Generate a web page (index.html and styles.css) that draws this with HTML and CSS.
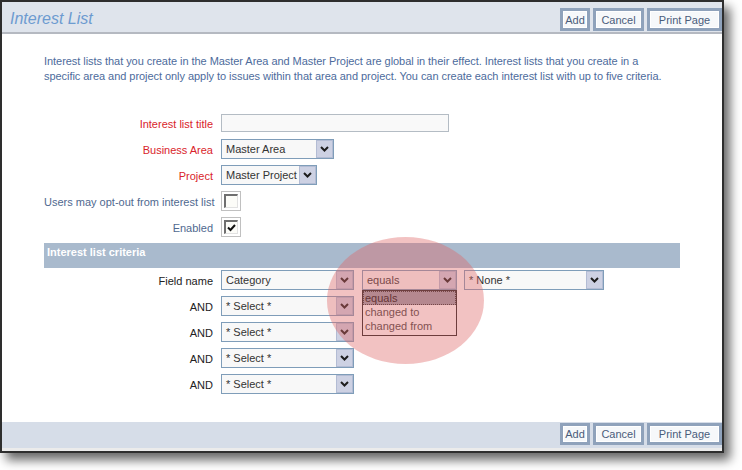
FILE: index.html
```html
<!DOCTYPE html>
<html>
<head>
    <meta charset="UTF-8">
    <title>Interest List</title>
    <link rel="stylesheet" href="styles.css">
</head>
<body>
<div class="shot">
    <div class="win">
        <div class="head">
            <h1>Interest List</h1>
            <div class="btns">
                <button class="btn btnAdd">Add</button>
                <button class="btn btnCancel">Cancel</button>
                <button class="btn btnPrint">Print Page</button>
            </div>
        </div>

        <div class="body">
            <p class="intro">Interest lists that you create in the Master Area and Master Project are global in their effect. Interest lists that you create in a<br>specific area and project only apply to issues within that area and project. You can create each interest list with up to five criteria.</p>

            <div class="form">
                <div class="row">
                    <label class="req">Interest list title</label>
                    <span class="text"></span>
                </div>
                <div class="row">
                    <label class="req">Business Area</label>
                    <div class="sel selArea"><span class="val">Master Area</span><span class="arr"><svg width="9" height="6" viewBox="0 0 9 6"><polyline points="1,1 4.5,4.5 8,1" fill="none" stroke="#1d1d1d" stroke-width="2"/></svg></span></div>
                </div>
                <div class="row">
                    <label class="req">Project</label>
                    <div class="sel selProject"><span class="val">Master Project</span><span class="arr"><svg width="9" height="6" viewBox="0 0 9 6"><polyline points="1,1 4.5,4.5 8,1" fill="none" stroke="#1d1d1d" stroke-width="2"/></svg></span></div>
                </div>
                <div class="row">
                    <label>Users may opt-out from interest list</label>
                    <span class="chk"><span class="box"></span></span>
                </div>
                <div class="row">
                    <label>Enabled</label>
                    <span class="chk"><span class="box"><svg width="9" height="8" viewBox="0 0 9 8"><polyline points="1,3.5 3.5,6 8,1" fill="none" stroke="#111" stroke-width="2"/></svg></span></span>
                </div>
            </div>

            <div class="section">Interest list criteria</div>

            <div class="criteria">
                <div class="row">
                    <label class="dark">Field name</label>
                    <div class="sel selField"><span class="val">Category</span><span class="arr"><svg width="9" height="6" viewBox="0 0 9 6"><polyline points="1,1 4.5,4.5 8,1" fill="none" stroke="#1d1d1d" stroke-width="2"/></svg></span></div>
                    <div class="sel selOp"><span class="val">equals</span><span class="arr"><svg width="9" height="6" viewBox="0 0 9 6"><polyline points="1,1 4.5,4.5 8,1" fill="none" stroke="#1d1d1d" stroke-width="2"/></svg></span>
                        <ul class="opts">
                            <li class="on">equals</li>
                            <li>changed to</li>
                            <li>changed from</li>
                        </ul>
                    </div>
                    <div class="sel selVal"><span class="val">* None *</span><span class="arr"><svg width="9" height="6" viewBox="0 0 9 6"><polyline points="1,1 4.5,4.5 8,1" fill="none" stroke="#1d1d1d" stroke-width="2"/></svg></span></div>
                </div>
                <div class="row">
                    <label class="dark">AND</label>
                    <div class="sel selField"><span class="val">* Select *</span><span class="arr"><svg width="9" height="6" viewBox="0 0 9 6"><polyline points="1,1 4.5,4.5 8,1" fill="none" stroke="#1d1d1d" stroke-width="2"/></svg></span></div>
                </div>
                <div class="row">
                    <label class="dark">AND</label>
                    <div class="sel selField"><span class="val">* Select *</span><span class="arr"><svg width="9" height="6" viewBox="0 0 9 6"><polyline points="1,1 4.5,4.5 8,1" fill="none" stroke="#1d1d1d" stroke-width="2"/></svg></span></div>
                </div>
                <div class="row">
                    <label class="dark">AND</label>
                    <div class="sel selField"><span class="val">* Select *</span><span class="arr"><svg width="9" height="6" viewBox="0 0 9 6"><polyline points="1,1 4.5,4.5 8,1" fill="none" stroke="#1d1d1d" stroke-width="2"/></svg></span></div>
                </div>
                <div class="row">
                    <label class="dark">AND</label>
                    <div class="sel selField"><span class="val">* Select *</span><span class="arr"><svg width="9" height="6" viewBox="0 0 9 6"><polyline points="1,1 4.5,4.5 8,1" fill="none" stroke="#1d1d1d" stroke-width="2"/></svg></span></div>
                </div>
            </div>
        </div>

        <div class="foot">
            <div class="btns">
                <button class="btn btnAdd">Add</button>
                <button class="btn btnCancel">Cancel</button>
                <button class="btn btnPrint">Print Page</button>
            </div>
        </div>

        <!-- red circle drawn over the operator dropdown -->
        <div class="spot"></div>
    </div>
</div>
</body>
</html>
```

FILE: styles.css
```css
* {
    margin: 0;
    padding: 0;
    box-sizing: border-box;
}

body {
    background: #fff;
    font-family: "Liberation Sans", Arial, sans-serif;
    font-size: 11px;
    color: #333;
}

ul, li {
    list-style: none;
}

.shot {
    width: 742px;
    height: 470px;
    overflow: hidden;
}

.win {
    position: relative;
    display: flex;
    flex-direction: column;
    width: 724px;
    height: 453px;
    border: 2px solid #2e2e2e;
    background: #fff;
    box-shadow: 6px 7px 10px rgba(0, 0, 0, .6);
}

/* title bar */
.head {
    display: flex;
    justify-content: space-between;
    align-items: flex-start;
    height: 32px;
    padding: 6px 0 0 8px;
    background: #dfe4ec;
    border-bottom: 2px solid #b5b9c1;
}

.head h1 {
    font-size: 16px;
    font-style: italic;
    font-weight: normal;
    line-height: 22px;
    color: #6d9bd0;
}

.btns {
    display: flex;
    gap: 3px;
}

.btn {
    height: 23px;
    font-family: "Liberation Sans", Arial, sans-serif;
    font-size: 11px;
    color: #4a5c7a;
    background: #f6f8fa;
    border: 3px solid #8fa2bb;
    box-shadow: inset 0 0 0 1px #fff;
}

.btnAdd { width: 30px; }
.btnCancel { width: 51px; }
.btnPrint { width: 75px; }

/* content */
.body {
    flex: 1;
    padding: 20px 0 0 42px;
}

.intro {
    white-space: nowrap;
    letter-spacing: -0.05px;
    line-height: 15px;
    color: #4d6b9c;
}

.form {
    margin-top: 29px;
    display: flex;
    flex-direction: column;
    gap: 6px;
}

.row {
    display: flex;
    align-items: center;
    height: 20px;
}

.row label {
    width: 169px;
    margin-right: 8px;
    padding-top: 2px;
    text-align: right;
    color: #50698f;
    white-space: nowrap;
}

.row label.req {
    color: #d9242b;
}

.row label.dark {
    color: #222;
}

.text {
    display: block;
    width: 228px;
    height: 18px;
    border: 1px solid #b4bcc4;
    background: #f9f9f9;
}

.sel {
    position: relative;
    display: flex;
    height: 20px;
    border: 1px solid #7f9db9;
    background: #f8f8f8;
}

.sel .val {
    flex: 1;
    padding-left: 4px;
    line-height: 18px;
    color: #333;
    white-space: nowrap;
    overflow: hidden;
}

.sel .arr {
    display: flex;
    align-items: center;
    justify-content: center;
    width: 17px;
    height: 18px;
    border: 1px solid #b3bcd4;
    background: #cdd1e3;
}

.selArea { width: 113px; }
.selProject { width: 96px; }
.selField { width: 133px; }
.selOp { width: 95px; margin-left: 8px; }
.selVal { width: 140px; margin-left: 7px; }

.opts {
    position: absolute;
    left: -1px;
    top: 19px;
    width: 95px;
    padding: 0 0 2px;
    border: 1px solid #222;
    background: #fff;
}

.opts li {
    height: 14px;
    line-height: 14px;
    padding-left: 2px;
    color: #444;
}

.opts li.on {
    background: #9a9eab;
    color: #111;
    outline: 1px dotted #333;
    outline-offset: -1px;
}

.chk {
    display: block;
    width: 20px;
    height: 20px;
    padding: 2px;
    border: 1px solid #c0c0c0;
    background: #fff;
}

.chk .box {
    display: flex;
    align-items: center;
    justify-content: center;
    width: 14px;
    height: 14px;
    border-top: 2px solid #6f6f6f;
    border-left: 2px solid #6f6f6f;
    border-right: 1px solid #e2e2e2;
    border-bottom: 1px solid #e2e2e2;
    background: #fcfcf8;
}

.section {
    width: 636px;
    height: 25px;
    margin-top: 6px;
    padding: 2px 3px;
    line-height: 14px;
    font-weight: bold;
    color: #fff;
    background: #a9bacd;
}

.criteria {
    margin-top: 2px;
    display: flex;
    flex-direction: column;
    gap: 6px;
}

/* bottom bar */
.foot {
    display: flex;
    justify-content: flex-end;
    height: 29px;
    padding-top: 1px;
    background: #d6dde8;
    border-bottom: 3px solid #ebebeb;
}

.foot .btn {
    height: 22px;
}

.spot {
    position: absolute;
    left: 325px;
    top: 235px;
    width: 157px;
    height: 127px;
    border-radius: 50%;
    background: rgba(222, 102, 102, .4);
    pointer-events: none;
}
```
